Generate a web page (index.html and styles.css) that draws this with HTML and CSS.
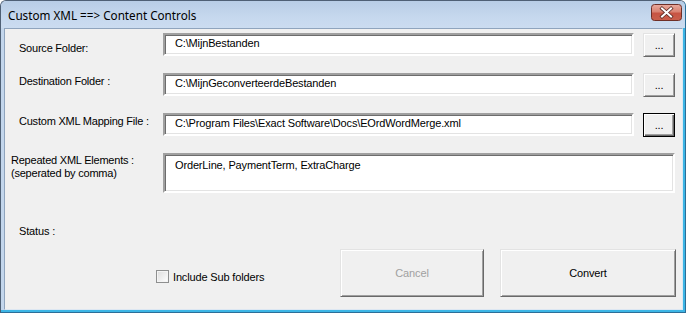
FILE: index.html
```html
<!DOCTYPE html>
<html>
<head>
<meta charset="utf-8">
<link rel="stylesheet" href="styles.css">
</head>
<body>
<div class="window">
  <div class="titlebar">
    <span class="title">Custom XML ==&gt; Content Controls</span>
    <svg class="close" width="31" height="17" viewBox="0 0 31 17">
      <defs>
        <linearGradient id="cg" x1="0" y1="0" x2="0" y2="1">
          <stop offset="0" stop-color="#e9ab9f"/>
          <stop offset="0.45" stop-color="#d98372"/>
          <stop offset="0.55" stop-color="#c75443"/>
          <stop offset="1" stop-color="#c9604c"/>
        </linearGradient>
      </defs>
      <rect x="0.5" y="0.5" width="30" height="16" rx="3" fill="url(#cg)" stroke="#6e2f27"/>
      <path d="M11 4.5 L20 12.5 M20 4.5 L11 12.5" stroke="#5a2a24" stroke-width="3.6" stroke-linecap="square" fill="none"/>
      <path d="M11 4.5 L20 12.5 M20 4.5 L11 12.5" stroke="#ffffff" stroke-width="2" stroke-linecap="square" fill="none"/>
    </svg>
  </div>
  <div class="frame">
    <div class="client">
      <div class="row">
        <div class="label l1">Source Folder:</div>
        <div class="textbox">C:\MijnBestanden</div>
        <div class="btn small">...</div>
      </div>
      <div class="row gap">
        <div class="label l2">Destination Folder :</div>
        <div class="textbox">C:\MijnGeconverteerdeBestanden</div>
        <div class="btn small">...</div>
      </div>
      <div class="row gap">
        <div class="label l2">Custom XML Mapping File :</div>
        <div class="textbox">C:\Program Files\Exact Software\Docs\EOrdWordMerge.xml</div>
        <div class="btn small focused">...</div>
      </div>
      <div class="row gap">
        <div class="label l3">Repeated XML Elements :<br>(seperated by comma)</div>
        <div class="textarea">OrderLine, PaymentTerm, ExtraCharge</div>
      </div>
      <div class="status">Status :</div>
      <div class="bottom">
        <label class="check">
          <span class="box"></span>
          <span class="check-text">Include Sub folders</span>
        </label>
        <div class="btn big cancel disabled">Cancel</div>
        <div class="btn big convert">Convert</div>
      </div>
    </div>
  </div>
</div>
</body>
</html>
```

FILE: styles.css
```css
* { box-sizing: border-box; }
html, body { margin: 0; padding: 0; }
body {
  width: 686px;
  height: 313px;
  overflow: hidden;
  background: #ffffff;
  font-family: "Liberation Sans", Arial, sans-serif;
  font-size: 11px;
  letter-spacing: -0.15px;
  color: #000;
}
.window {
  width: 686px;
  height: 313px;
  display: flex;
  flex-direction: column;
  border: 1px solid #4f6075;
  border-right-color: #2c6e98;
  border-bottom-color: #2c6e98;
  border-radius: 6px 6px 0 0;
  background: #c3d6ec;
}
.titlebar {
  height: 27px;
  flex: none;
  display: flex;
  justify-content: space-between;
  align-items: flex-start;
  padding: 0 3px 0 7px;
  background: linear-gradient(#b8cde6, #c6d8ee 60%, #cbdcf0);
  border-radius: 5px 5px 0 0;
}
.title {
  font-family: "Noto Sans", "Open Sans", sans-serif;
  font-size: 11.7px;
  letter-spacing: 0;
  line-height: 16px;
  margin-top: 6px;
  color: #000;
}
.close { margin-top: 3px; display: block; }
.frame {
  flex: 1;
  display: flex;
  padding-left: 3px;
  border-right: 2px solid #3cb5e5;
  border-bottom: 2px solid #3cb5e5;
  background: #c3d6ec;
}
.client {
  flex: 1;
  background: #f0f0f0;
  border: 1px solid #8fa4bd;
  border-right-color: #dde7f2;
  border-bottom-color: #dde7f2;
  padding: 4px 6px 0 6px;
}
.row {
  display: flex;
  align-items: flex-start;
}
.row.gap { margin-top: 16px; }
.label {
  width: 152px;
  flex: none;
  line-height: 13px;
  padding-left: 8px;
  white-space: nowrap;
  letter-spacing: -0.22px;
}
.l1 { padding-top: 9px; }
.l2 { padding-top: 2px; }
.l3 { padding-top: 1px; padding-left: 0; }
.textbox, .textarea {
  background: #fff;
  border-style: solid;
  border-width: 2px;
  border-color: #a0a0a0 #fff #fff #a0a0a0;
  box-shadow: inset 1px 1px 0 #6d6d6d, inset -1px -1px 0 #e3e3e3;
  line-height: 13px;
  padding: 2px 10px 0;
  white-space: nowrap;
}
.textbox {
  width: 471px;
  height: 23px;
  flex: none;
}
.textarea {
  width: 512px;
  height: 40px;
  flex: none;
  padding-top: 4px;
}
.btn {
  display: flex;
  align-items: center;
  justify-content: center;
  background: #f0f0f0;
  border: 1px solid;
  border-color: #e3e3e3 #696969 #696969 #e3e3e3;
  box-shadow: inset 1px 1px 0 #ffffff, inset -1px -1px 0 #a0a0a0;
  line-height: 13px;
  flex: none;
}
.btn.small {
  width: 32px;
  height: 24px;
  margin-left: 9px;
  padding-top: 1px;
}
.btn.focused {
  border-color: #000;
  box-shadow: inset 1px 1px 0 #ffffff, inset -1px -1px 0 #696969, inset -2px -2px 0 #a0a0a0;
}
.status {
  margin-top: 32px;
  padding-left: 8px;
  line-height: 13px;
}
.bottom {
  display: flex;
  align-items: flex-start;
  margin-top: 11px;
}
.check {
  display: flex;
  align-items: center;
  margin-left: 145px;
  margin-top: 21px;
  height: 13px;
}
.box {
  width: 13px;
  height: 13px;
  border: 1px solid #8e8f8f;
  background: linear-gradient(135deg, #dcdcdc, #ffffff);
  box-shadow: inset 0 0 0 1px #f4f4f4;
  margin-right: 4px;
}
.check-text { line-height: 13px; padding-top: 1px; }
.btn.big { height: 48px; }
.cancel { width: 144px; margin-left: auto; }
.convert { width: 176px; margin-left: 16px; }
.disabled { color: #a0a0a0; }
```
